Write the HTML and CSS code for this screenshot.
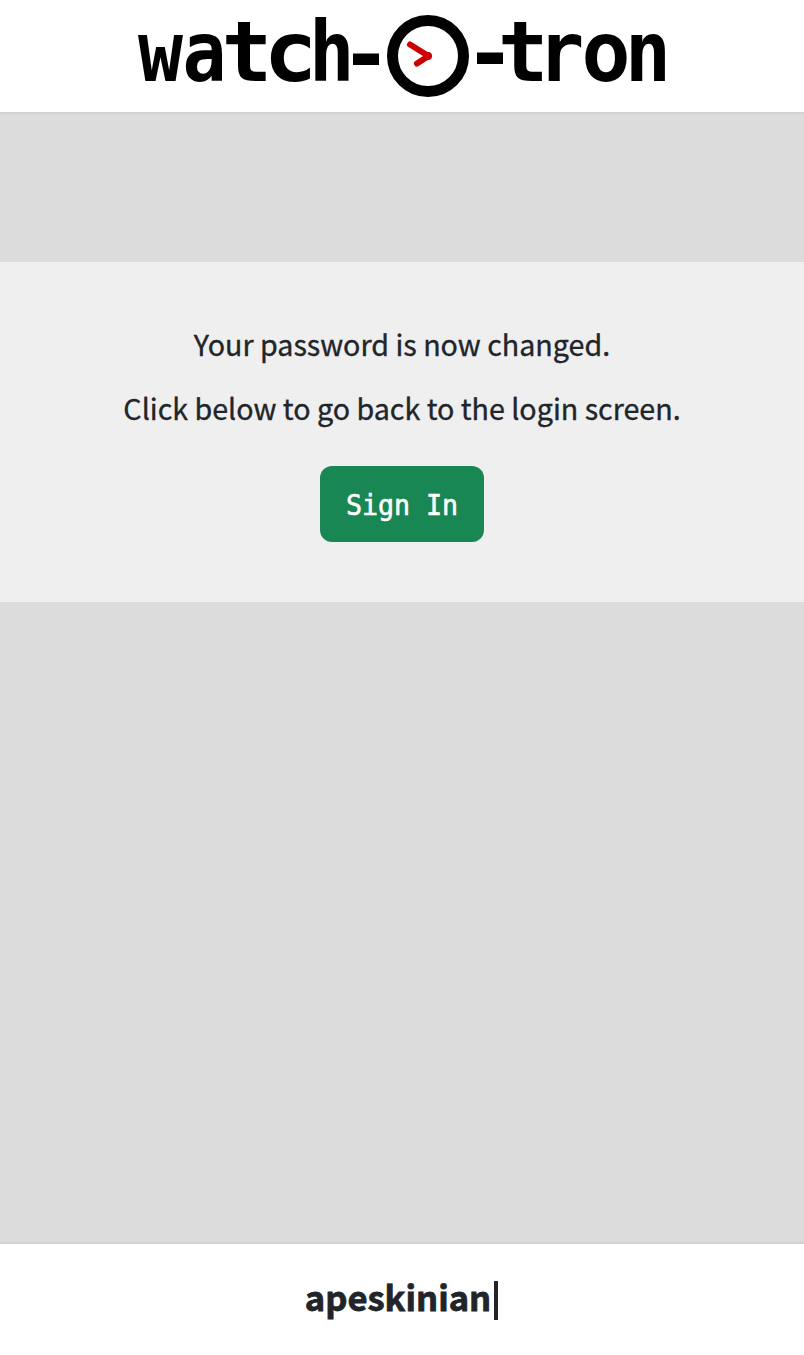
FILE: index.html
```html
<!DOCTYPE html>
<html lang="en">
<head>
<meta charset="utf-8">
<title>watch-o-tron</title>
<link rel="stylesheet" href="styles.css">
</head>
<body>
<header class="header">
  <svg class="logo" width="552" height="112" viewBox="126 0 552 112" role="img" aria-label="watch-o-tron">
    <g class="logo-text">
      <text transform="translate(138 81) scale(.9 1)">w</text>
      <text transform="translate(182.500 81) scale(.88 1)">a</text>
      <text transform="translate(221.800 81) scale(1.010 1)">t</text>
      <text transform="translate(263.500 81) scale(1.080 1)">c</text>
      <text transform="translate(309 81) scale(.91 1)">h</text>
      <text transform="translate(498 80.500) scale(1.010 1)">t</text>
      <text transform="translate(537.700 80.500) scale(.93 1)">r</text>
      <text transform="translate(581.500 80.500) scale(.98 1)">o</text>
      <text transform="translate(625 80.500) scale(.92 1)">n</text>
    </g>
    <path d="M353 53.500h26v11.500h-26zM477 52.500h26v11.500h-26z"/>
    <circle class="clock-face" cx="428" cy="56" r="35.500"/>
    <path class="clock-hands" d="M410 44.500L428.500 56L417 63.500"/>
    <circle class="clock-pin" cx="428" cy="56" r="4"/>
  </svg>
</header>
<main class="main">
  <section class="panel">
    <p class="message">Your password is now changed.</p>
    <p class="message">Click below to go back to the login screen.</p>
    <button class="button" type="button"><span class="button-label">Sign In</span></button>
  </section>
</main>
<footer class="footer"><span class="author">apeskinian</span><span class="cursor"></span></footer>
</body>
</html>
```
FILE: styles.css
```css
* { box-sizing: border-box; }
body {
  margin: 0;
  height: 1355px;
  display: flex;
  flex-direction: column;
  background: #dcdcdc;
  color: #212529;
  font-family: "Noto Sans CJK SC", sans-serif;
  overflow: hidden;
}
.header {
  height: 114px;
  flex: none;
  display: flex;
  justify-content: center;
  background: #fff;
  border-bottom: 2px solid #d2d2d2;
}
.logo { display: block; overflow: visible; }
.logo-text { font: bold 83px "DejaVu Sans Mono", monospace; }
.clock-face { fill: #fff; stroke: #000; stroke-width: 11; }
.clock-hands {
  fill: none;
  stroke: #c00;
  stroke-width: 6;
  stroke-linecap: round;
  stroke-linejoin: round;
}
.clock-pin { fill: #c00; }
.main { flex: 1; padding-top: 148px; }
.panel {
  height: 340px;
  padding-top: 58px;
  display: flex;
  flex-direction: column;
  align-items: center;
  background: #efefef;
}
.message {
  margin: 0 0 16px;
  font-size: 28.65px;
  line-height: 48px;
  white-space: nowrap;
  -webkit-text-stroke: .35px #212529;
}
.button {
  width: 164px;
  height: 76px;
  margin-top: 18px;
  padding: 3px 0 0;
  border: 0;
  border-radius: 12px;
  background: #198754;
  color: #fff;
  font: 28px/48px "DejaVu Sans Mono", monospace;
  -webkit-text-stroke: .6px #fff;
}
.button-label {
  display: inline-block;
  white-space: nowrap;
  transform: scaleX(.95);
}
.footer {
  height: 113px;
  flex: none;
  display: flex;
  align-items: center;
  justify-content: center;
  background: #fff;
  border-top: 2px solid #d2d2d2;
}
.author {
  padding-bottom: 8px;
  font-size: 34.6px;
  font-weight: 700;
  line-height: 48px;
  -webkit-text-stroke: .8px #212529;
}
.cursor { width: 4px; height: 39px; margin: 2px 1px 0 3px; background: #212529; }
```
